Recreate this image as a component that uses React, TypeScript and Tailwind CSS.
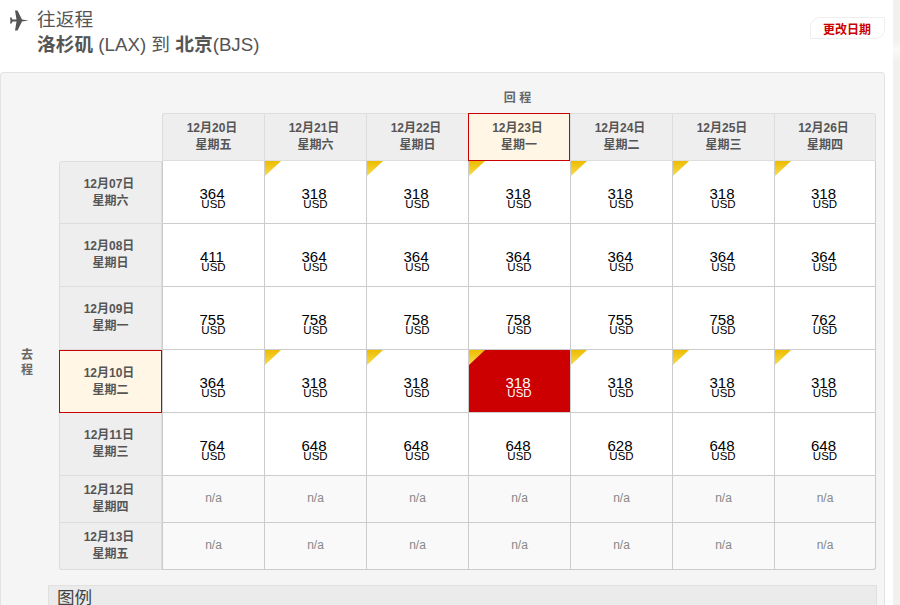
const returnDates = [
  ["12月20日", "星期五"],
  ["12月21日", "星期六"],
  ["12月22日", "星期日"],
  ["12月23日", "星期一"],
  ["12月24日", "星期二"],
  ["12月25日", "星期三"],
  ["12月26日", "星期四"],
];

const rows = [
  { date: "12月07日", day: "星期六", h: "h-[63px]", prices: ["364", "318", "318", "318", "318", "318", "318"], flags: [0, 1, 1, 1, 1, 1, 1] },
  { date: "12月08日", day: "星期日", h: "h-[63px]", prices: ["411", "364", "364", "364", "364", "364", "364"], flags: [] },
  { date: "12月09日", day: "星期一", h: "h-[63px]", prices: ["755", "758", "758", "758", "755", "758", "762"], flags: [] },
  { date: "12月10日", day: "星期二", h: "h-[63px]", prices: ["364", "318", "318", "318", "318", "318", "318"], flags: [0, 1, 1, 1, 1, 1, 1], active: true },
  { date: "12月11日", day: "星期三", h: "h-[63px]", prices: ["764", "648", "648", "648", "628", "648", "648"], flags: [] },
  { date: "12月12日", day: "星期四", h: "h-[47px]", prices: [], flags: [] },
  { date: "12月13日", day: "星期五", h: "h-[47px]", prices: [], flags: [] },
];

function PlaneIcon() {
  return (
    <svg className="ml-[9px] mt-[10px] shrink-0" width="20" height="21" viewBox="9 10 20 21">
      <path
        d="M28.5 20.5 22 19.5 17.5 10.5H15L16.5 19.5H12.5L11.5 17.5H10L10.5 20.5 10 23.5H11.5L12.5 21.5H16.5L15 30.5H17.5L22 21.5Z"
        fill="#555"
      />
    </svg>
  );
}

function Corner() {
  return (
    <svg className="absolute left-0 top-0" width="16" height="15" viewBox="0 0 16 15">
      <defs>
        <linearGradient id="corner" x1="0" y1="0" x2="0" y2="1">
          <stop offset="0" stopColor="#eebc00" />
          <stop offset="1" stopColor="#f6dc4e" />
        </linearGradient>
      </defs>
      <path d="M0 0H16L0 15Z" fill="url(#corner)" />
    </svg>
  );
}

function PriceCell({ price, flag, selected, first }: { price: string; flag: boolean; selected: boolean; first: boolean }) {
  return (
    <div
      className={`relative flex flex-col items-center border-r border-b border-[#ccc] pt-[25px] ${
        first ? "border-l" : ""
      } ${selected ? "bg-[#cc0000] text-white" : "bg-white text-black"}`}
    >
      {flag && <Corner />}
      <div className="pr-[3px] text-[15px] leading-[15px]">{price}</div>
      <div className="mt-[-3px] text-[11.5px] leading-[13px]">USD</div>
    </div>
  );
}

export default function App() {
  return (
    <div className="relative h-[605px] w-[900px] overflow-hidden bg-white font-['Liberation_Sans','Noto_Sans_CJK_SC',sans-serif] text-[#555]">
      <div className="absolute right-0 top-0 h-full w-[7px] bg-[#f1f1ef]">
        <div className="mt-[40px] h-[20px] bg-gradient-to-b from-transparent via-white/60 to-transparent" />
      </div>

      <div className="flex h-[72px] w-[885px] items-start">
        <PlaneIcon />
        <div className="ml-[8px] mt-[7px] text-[18.72px] leading-[25px]">
          <div>往返程</div>
          <div>
            <b>洛杉矶</b> (LAX) 到 <b>北京</b>(BJS)
          </div>
        </div>
        <div className="ml-auto mt-[17px] flex h-[22px] w-[75px] items-center justify-end rounded-tl-[10px] rounded-br-[10px] border border-[#eee] pr-[13px] pt-[3px] text-[12px] font-bold text-[#cc0000]">
          更改日期
        </div>
      </div>

      <div className="h-[560px] w-[885px] rounded-[3px] border border-[#e3e3e3] bg-[#f5f5f5]">
        <div className="ml-[161px] h-[40px] w-[714px] pr-[3px] pt-[17px] text-center text-[12px] font-bold leading-[16px] text-[#666]">
          回 程
        </div>

        <div className="flex">
          <div className="flex w-[58px] items-center justify-center pb-[6px] pt-[48px]">
            <div className="mr-[6px] w-[12px] text-[12px] font-bold leading-[15px] text-[#666]">去 程</div>
          </div>

          <div className="w-[817px]">
            <div className="grid h-[48px] grid-cols-[103px_repeat(7,102px)]">
              <div />
              {returnDates.map(([date, day], i) => (
                <div
                  key={date}
                  className={`flex flex-col items-center justify-center text-[12px] font-bold leading-[17px] ${
                    i === 3
                      ? "border border-[#cc0000] bg-[#fff6e5]"
                      : `border-t border-l border-b border-[#ddd] bg-[#eee] ${i === 0 ? "rounded-tl-[3px]" : ""} ${i === 6 ? "rounded-tr-[3px] border-r" : ""}`
                  }`}
                >
                  <div className="pr-[3px]">{date}</div>
                  <div>{day}</div>
                </div>
              ))}
            </div>

            {rows.map((row, r) => (
              <div key={row.date} className={`grid grid-cols-[103px_103px_repeat(5,102px)_101px] ${row.h}`}>
                <div
                  className={`flex flex-col items-center justify-center text-[12px] font-bold leading-[17px] ${
                    row.active
                      ? "border border-[#cc0000] bg-[#fff6e5]"
                      : `border-b border-l border-r border-[#ddd] bg-[#eee] ${r === 0 ? "rounded-tl-[3px] border-t" : ""} ${r === rows.length - 1 ? "rounded-bl-[3px]" : ""}`
                  }`}
                >
                  <div className="pr-[3px]">{row.date}</div>
                  <div>{row.day}</div>
                </div>
                {returnDates.map(([date], c) =>
                  row.prices.length ? (
                    <PriceCell
                      key={date}
                      price={row.prices[c]}
                      flag={row.flags[c] === 1}
                      selected={!!row.active && c === 3}
                      first={c === 0}
                    />
                  ) : (
                    <div
                      key={date}
                      className={`flex items-center justify-center border-r border-b border-[#ccc] bg-[#f9f9f9] pb-[3px] text-[12px] text-[#888] ${
                        c === 0 ? "border-l" : ""
                      } ${c === 6 && r === rows.length - 1 ? "rounded-br-[3px]" : ""}`}
                    >
                      n/a
                    </div>
                  ),
                )}
              </div>
            ))}
          </div>
        </div>

        <div className="ml-[47px] mt-[15px] h-[40px] w-[829px] border border-[#e0e0e0] bg-[#ebebeb] pl-[8px] text-[17.6px] leading-[25px] text-[#444]">
          图例
        </div>
      </div>
    </div>
  );
}
